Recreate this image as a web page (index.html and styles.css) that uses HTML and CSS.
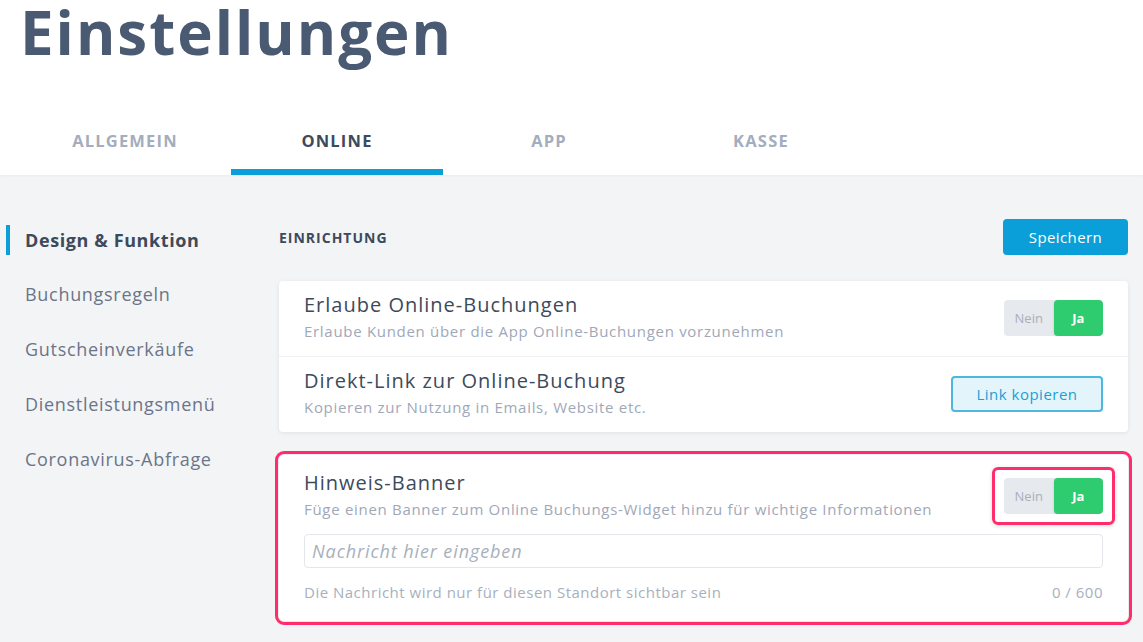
FILE: index.html
```html
<!DOCTYPE html>
<html>
<head>
    <title>Einstellungen</title>
    <meta charset="UTF-8">
    <link rel="stylesheet" href="styles.css">
</head>
<body>
    <header class="top">
        <h1>Einstellungen</h1>
        <nav class="tabs">
            <a class="tab">ALLGEMEIN</a>
            <a class="tab active">ONLINE</a>
            <a class="tab">APP</a>
            <a class="tab">KASSE</a>
        </nav>
    </header>

    <div class="page">
        <aside class="side">
            <a class="side-item active">Design &amp; Funktion</a>
            <a class="side-item">Buchungsregeln</a>
            <a class="side-item">Gutscheinverkäufe</a>
            <a class="side-item">Dienstleistungsmenü</a>
            <a class="side-item">Coronavirus-Abfrage</a>
        </aside>

        <main class="main">
            <div class="main-head">
                <h2>EINRICHTUNG</h2>
                <button class="btn-save">Speichern</button>
            </div>

            <section class="card">
                <div class="row">
                    <div class="row-text">
                        <div class="row-title">Erlaube Online-Buchungen</div>
                        <div class="row-sub">Erlaube Kunden über die App Online-Buchungen vorzunehmen</div>
                    </div>
                    <div class="toggle">
                        <span class="opt">Nein</span>
                        <span class="opt on">Ja</span>
                    </div>
                </div>
                <div class="row">
                    <div class="row-text">
                        <div class="row-title">Direkt-Link zur Online-Buchung</div>
                        <div class="row-sub">Kopieren zur Nutzung in Emails, Website etc.</div>
                    </div>
                    <button class="btn-link">Link kopieren</button>
                </div>
            </section>

            <section class="card marked">
                <div class="row banner-row">
                    <div class="row-text">
                        <div class="row-title">Hinweis-Banner</div>
                        <div class="row-sub">Füge einen Banner zum Online Buchungs-Widget hinzu für wichtige Informationen</div>
                    </div>
                    <div class="mark-box">
                        <div class="toggle">
                            <span class="opt">Nein</span>
                            <span class="opt on">Ja</span>
                        </div>
                    </div>
                </div>
                <div class="banner-body">
                    <input class="msg" type="text" placeholder="Nachricht hier eingeben">
                    <div class="msg-foot">
                        <span>Die Nachricht wird nur für diesen Standort sichtbar sein</span>
                        <span>0 / 600</span>
                    </div>
                </div>
            </section>
        </main>
    </div>
</body>
</html>
```

FILE: styles.css
```css
body { margin: 0; font-family: "Open Sans", "Noto Sans", sans-serif; background: #f3f4f6; color: #3d4a5c; }

.top { background: #fff; height: 175px; box-shadow: 0 1px 2px rgba(0,0,0,0.04); }
.top h1 { margin: 0; padding: 0 0 0 20px; height: 64px; font-size: 60px; line-height: 72px; font-weight: 700; color: #4a5a73; letter-spacing: 2px; position: relative; top: -4px; }
.tabs { display: flex; padding-left: 19px; margin-top: 43px; }
.tab { width: 212px; height: 68px; box-sizing: border-box; padding-top: 22px; text-align: center; font-size: 16.5px; font-weight: 700; letter-spacing: 1.2px; color: #a3adbd; border-bottom: 6px solid transparent; }
.tab.active { color: #3d4a5c; border-bottom-color: #0a9fd8; }

.page { display: flex; }
.side { width: 279px; flex-shrink: 0; padding-top: 44px; }
.side-item { display: block; height: 55px; line-height: 41px; margin-left: 6px; padding-left: 15px; border-left: 4px solid transparent; font-size: 18px; letter-spacing: 0.7px; color: #6b7588; box-sizing: border-box; }
.side-item.active { font-weight: 700; letter-spacing: 0.6px; color: #3d4a5c; border-left-color: #0a9fd8; height: 30px; line-height: 30px; margin-top: 6px; margin-bottom: 19px; }

.main { flex: 1; padding: 44px 15px 0 0; }
.main-head { display: flex; justify-content: space-between; align-items: center; height: 36px; margin-bottom: 26px; }
.main-head h2 { margin: 0; font-size: 14px; font-weight: 700; letter-spacing: 1px; color: #3d4a5c; }
.btn-save { width: 125px; height: 36px; border: none; border-radius: 4px; background: #0a9fd8; color: #fff; font-family: inherit; font-size: 15px; letter-spacing: 0.4px; }

.card { background: #fff; border-radius: 4px; box-shadow: 0 1px 4px rgba(0,0,0,0.08); margin-bottom: 23px; }
.row { display: flex; justify-content: space-between; align-items: center; padding: 11px 25px 13px 25px; border-bottom: 1px solid #eef0f3; }
.row:last-child { border-bottom: none; }
.row-title { font-size: 20px; font-weight: 500; letter-spacing: 1px; color: #3d4a5c; line-height: 26px; }
.row-sub { font-size: 15px; letter-spacing: 0.7px; color: #a0a8b8; line-height: 24px; margin-top: 1px; }

.toggle { display: flex; width: 99px; height: 36px; border-radius: 4px; background: #e6e9ed; overflow: hidden; font-size: 13px; }
.opt { flex: 1; display: flex; align-items: center; justify-content: center; color: #a9b0bc; }
.opt.on { background: #2ecb6f; color: #fff; font-weight: 700; border-radius: 4px; box-shadow: 0 1px 3px rgba(0,0,0,0.12); }

.btn-link { width: 152px; height: 36px; border: 2px solid #4db7e2; border-radius: 4px; background: #e4f4fb; color: #1a9fd4; font-family: inherit; font-size: 15px; letter-spacing: 0.5px; }

.marked { outline: 3px solid #ff2d6b; outline-offset: 1px; border-radius: 5px; }
.banner-row { border-bottom: none; padding-top: 15px; padding-bottom: 13px; }
.mark-box { border: 3px solid #ff2d6b; border-radius: 6px; padding: 8px 9px; margin: -12px -12px -12px 0; box-shadow: 0 1px 4px rgba(0,0,0,0.15); }
.banner-body { padding: 0 25px 19px 25px; }
.msg { display: block; width: 100%; height: 34px; box-sizing: border-box; border: 1px solid #e3e6ea; border-radius: 4px; padding: 0 7px; font-family: inherit; font-size: 18px; letter-spacing: 0.9px; }
.msg::placeholder { color: #a8b0bd; font-style: italic; }
.msg-foot { display: flex; justify-content: space-between; margin-top: 14px; font-size: 15px; letter-spacing: 0.5px; color: #a8b0bd; }
```
